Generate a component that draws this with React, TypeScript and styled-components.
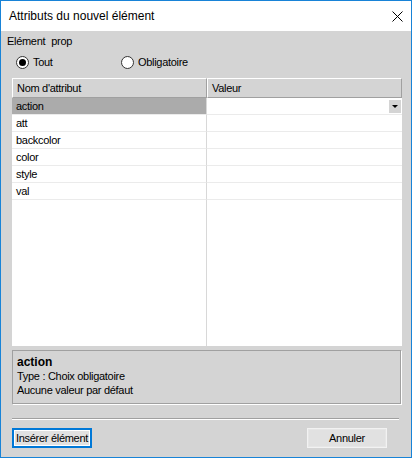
import React from "react";
import styled, { createGlobalStyle } from "styled-components";

const GlobalStyle = createGlobalStyle`
  html, body {
    margin: 0;
    padding: 0;
    background: #ffffff;
  }
  * {
    box-sizing: border-box;
  }
`;

const ATTRIBUTES = ["action", "att", "backcolor", "color", "style", "val"];

const Window = styled.div`
  width: 412px;
  height: 458px;
  border: 1px solid #1883d7;
  display: flex;
  flex-direction: column;
  font-family: "Liberation Sans", Arial, sans-serif;
  font-size: 11px;
  color: #000;
  overflow: hidden;
`;

const TitleBar = styled.div`
  height: 30px;
  flex: none;
  background: #ffffff;
  display: flex;
  align-items: center;
  padding-left: 8px;
  font-size: 12px;
`;

const TitleText = styled.span`
  flex: 1;
`;

const CloseBox = styled.div`
  width: 28px;
  height: 30px;
  display: flex;
  align-items: center;
  justify-content: center;
`;

const Body = styled.div`
  flex: 1;
  background: #d4d4d4;
  display: flex;
  flex-direction: column;
  padding: 0 9px 0 11px;
  letter-spacing: -0.3px;
`;

const LabelRow = styled.div`
  height: 14px;
  margin-top: 3px;
  margin-left: -5px;
  display: flex;
  align-items: center;
  gap: 6px;
`;

const RadioRow = styled.div`
  height: 16px;
  margin-top: 6px;
  padding-left: 4px;
  display: flex;
  align-items: center;
`;

const RadioLabel = styled.label<{ $width?: number }>`
  display: flex;
  align-items: center;
  gap: 4px;
  width: ${(p) => (p.$width ? `${p.$width}px` : "auto")};
`;

const RadioCircle = styled.span<{ $checked?: boolean }>`
  width: 13px;
  height: 13px;
  border-radius: 50%;
  border: 1px solid #333333;
  background: #ffffff;
  display: flex;
  align-items: center;
  justify-content: center;

  &::after {
    content: "";
    width: 7px;
    height: 7px;
    border-radius: 50%;
    background: ${(p) => (p.$checked ? "#000000" : "transparent")};
  }
`;

const Grid = styled.div`
  margin-top: 8px;
  height: 268px;
  width: 390px;
  background: #ffffff;
  display: flex;
  flex-direction: column;
`;

const GridRow = styled.div<{ $fill?: boolean }>`
  display: grid;
  grid-template-columns: 195px 1fr;
  flex: ${(p) => (p.$fill ? 1 : "none")};
`;

const HeaderCell = styled.div`
  height: 20px;
  background: #d4d4d4;
  border-top: 1px solid #ffffff;
  border-left: 1px solid #ffffff;
  border-bottom: 1px solid #a0a0a0;
  border-right: 1px solid #a0a0a0;
  display: flex;
  align-items: center;
  padding-left: 4px;
`;

const Cell = styled.div<{ $selected?: boolean; $first?: boolean; $line?: boolean }>`
  height: ${(p) => (p.$line ? "17px" : "auto")};
  background: ${(p) => (p.$selected ? "#ababab" : "#ffffff")};
  border-bottom: ${(p) => (p.$line ? "1px solid #ebebeb" : "none")};
  border-right: ${(p) => (p.$first ? "1px solid #d8d8d8" : "none")};
  display: flex;
  align-items: center;
  padding-left: 4px;
`;

const ValueCell = styled(Cell)`
  justify-content: flex-end;
  padding-right: 1px;
`;

const DropButton = styled.div`
  width: 12px;
  height: 13px;
  background: #d4d4d4;
  display: flex;
  align-items: center;
  justify-content: center;
`;

const InfoPanel = styled.div`
  margin-top: 4px;
  height: 54px;
  width: 389px;
  border: 1px solid #a0a0a0;
  box-shadow: 1px 1px 0 #ffffff;
  padding: 4px 0 0 4px;
  display: flex;
  flex-direction: column;
  line-height: 14px;
`;

const InfoTitle = styled.div`
  font-weight: bold;
  font-size: 12px;
  letter-spacing: 0;
`;

const Separator = styled.div`
  margin-top: 14px;
  width: 387px;
  border-top: 1px solid #a0a0a0;
  border-bottom: 1px solid #ffffff;
`;

const ButtonRow = styled.div`
  margin-top: 8px;
  display: flex;
  justify-content: space-between;
  width: 375px;
`;

const Button = styled.button<{ $focused?: boolean }>`
  width: 80px;
  height: 20px;
  padding: 0;
  white-space: nowrap;
  font-family: "Liberation Sans", Arial, sans-serif;
  font-size: 11px;
  letter-spacing: -0.3px;
  color: #000;
  background: #e1e1e1;
  border: ${(p) => (p.$focused ? "2px solid #0078d7" : "1px solid #f2f2f2")};
  box-shadow: ${(p) => (p.$focused ? "inset 0 0 0 1px #ffffff" : "inset 0 0 0 1px #e6e6e6")};
`;

const App = () => {
  return (
    <>
      <GlobalStyle />
      <Window>
        <TitleBar>
          <TitleText>Attributs du nouvel élément</TitleText>
          <CloseBox>
            <svg width="11" height="11" viewBox="0 0 11 11">
              <path d="M0.5 0.5 L10.5 10.5 M10.5 0.5 L0.5 10.5" stroke="#000" strokeWidth="1" />
            </svg>
          </CloseBox>
        </TitleBar>
        <Body>
          <LabelRow>
            <span>Elément</span>
            <span>prop</span>
          </LabelRow>
          <RadioRow>
            <RadioLabel $width={105}>
              <RadioCircle $checked />
              Tout
            </RadioLabel>
            <RadioLabel>
              <RadioCircle />
              Obligatoire
            </RadioLabel>
          </RadioRow>
          <Grid>
            <GridRow>
              <HeaderCell>Nom d'attribut</HeaderCell>
              <HeaderCell>Valeur</HeaderCell>
            </GridRow>
            {ATTRIBUTES.map((name, inx) => (
              <GridRow key={name}>
                <Cell $first $line $selected={inx === 0}>
                  {name}
                </Cell>
                <ValueCell $line>
                  {inx === 0 && (
                    <DropButton>
                      <svg width="6" height="3" viewBox="0 0 6 3">
                        <path d="M0 0 H6 L3 3 Z" fill="#000" />
                      </svg>
                    </DropButton>
                  )}
                </ValueCell>
              </GridRow>
            ))}
            <GridRow $fill>
              <Cell $first />
              <Cell />
            </GridRow>
          </Grid>
          <InfoPanel>
            <InfoTitle>action</InfoTitle>
            <div>Type : Choix obligatoire</div>
            <div>Aucune valeur par défaut</div>
          </InfoPanel>
          <Separator />
          <ButtonRow>
            <Button $focused>Insérer élément</Button>
            <Button>Annuler</Button>
          </ButtonRow>
        </Body>
      </Window>
    </>
  );
};

export default App;
